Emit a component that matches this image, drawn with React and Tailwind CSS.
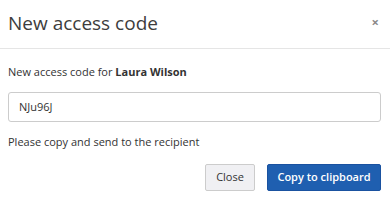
export default function App() {
  return (
    <div className="w-[390px] h-[203px] bg-white text-[#333] overflow-hidden" style={{ fontFamily: '"Open Sans", sans-serif' }}>
      <div className="h-[49px] flex items-center justify-between pl-[8px] pr-[11px] border-b border-[#e5e5e5]">
        <h1 className="text-[19px] leading-[28px] text-[#3d3d3d] font-normal mt-[-2px]">New access code</h1>
        <button className="text-[#8a8a8a] text-[13px] leading-none font-bold mt-[-3px]">×</button>
      </div>
      <div className="px-[8px] pt-[15px]">
        <p className="text-[11px] leading-[16px] text-[#333]">
          New access code for <span className="font-bold">Laura Wilson</span>
        </p>
        <div className="mt-[12px] h-[30px] w-[373px] border border-[#ccc] rounded-[3px] flex items-center px-[10px] text-[11px]">
          NJu96J
        </div>
        <p className="mt-[12px] text-[11px] leading-[16px]">Please copy and send to the recipient</p>
        <div className="mt-[14px] flex justify-end gap-[12px] pr-[1px]">
          <button className="h-[27px] w-[50px] border border-[#ccc] bg-[#f0f0f3] rounded-[2px] text-[11px] text-[#333]">Close</button>
          <button className="h-[27px] w-[114px] border border-[#1a52a0] bg-[#1f5fb0] rounded-[2px] text-[11px] font-semibold text-white">Copy to clipboard</button>
        </div>
      </div>
    </div>
  );
}
